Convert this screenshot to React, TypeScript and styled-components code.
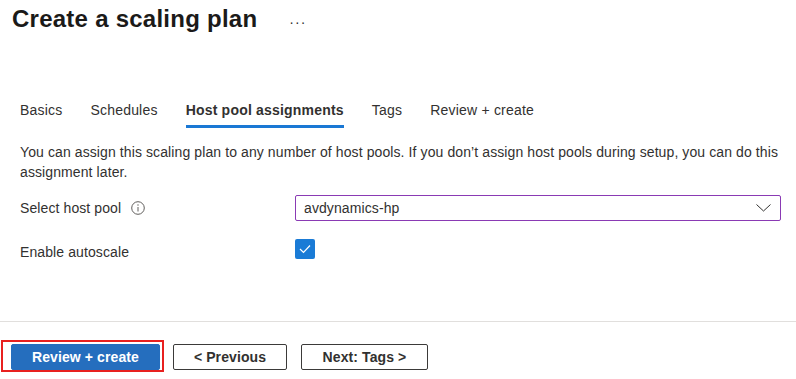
import React from "react";
import styled, { createGlobalStyle } from "styled-components";

const GlobalStyle = createGlobalStyle`
  body {
    margin: 0;
    background: #ffffff;
    font-family: "Liberation Sans", Arial, sans-serif;
    color: #323130;
    letter-spacing: 0.1px;
  }
`;

const Page = styled.div`
  width: 796px;
  height: 379px;
  display: flex;
  flex-direction: column;
  overflow: hidden;
`;

const Header = styled.div`
  display: flex;
  align-items: center;
  gap: 32px;
  padding: 3px 0 0 12px;
`;

const Title = styled.h1`
  margin: 0;
  font-size: 24px;
  line-height: 32px;
  font-weight: 700;
  letter-spacing: 0.25px;
  color: #1b1a19;
`;

const More = styled.span`
  font-size: 14px;
  letter-spacing: 1px;
  color: #323130;
  margin-top: 6px;
`;

const TabBar = styled.div`
  display: flex;
  gap: 28px;
  margin-top: 60px;
  padding-left: 20px;
`;

const Tab = styled.div<{ $active?: boolean }>`
  font-size: 14px;
  line-height: 20px;
  padding: 5px 0;
  letter-spacing: 0.2px;
  font-weight: ${(p) => (p.$active ? 700 : 400)};
  color: #323130;
  border-bottom: 3px solid ${(p) => (p.$active ? "#1a78d4" : "transparent")};
`;

const Content = styled.div`
  flex: 1;
  padding: 0 15px 0 20px;
`;

const Description = styled.p`
  margin: 14px 0 0;
  font-size: 14px;
  line-height: 20px;
`;

const Form = styled.div`
  display: grid;
  grid-template-columns: 275px 1fr;
  row-gap: 18px;
  margin-top: 13px;
`;

const Label = styled.div`
  display: flex;
  align-items: center;
  gap: 10px;
  font-size: 14px;
  line-height: 26px;
`;

const Select = styled.div`
  box-sizing: border-box;
  height: 26px;
  border: 1px solid #8a3ab4;
  border-radius: 2px;
  display: flex;
  align-items: center;
  justify-content: space-between;
  padding: 0 9px 0 8px;
  font-size: 14px;
`;

const CheckCell = styled.div`
  height: 26px;
`;

const Checkbox = styled.div`
  width: 20px;
  height: 20px;
  border-radius: 2px;
  background: #1a7bd6;
  display: flex;
  align-items: center;
  justify-content: center;
`;

const Footer = styled.div`
  height: 58px;
  box-sizing: border-box;
  border-top: 1px solid #e1dfdd;
  padding: 18px 0 0 1px;
  display: flex;
  align-items: flex-start;
`;

const Highlight = styled.div`
  border: 2px solid #e8201f;
  padding: 2px 2px 0 8px;
  margin-right: 9px;
`;

const Button = styled.button<{ $primary?: boolean; $width: number }>`
  box-sizing: border-box;
  width: ${(p) => p.$width}px;
  height: 26px;
  border-radius: 2px;
  font-family: "Liberation Sans", Arial, sans-serif;
  font-size: 14px;
  font-weight: 700;
  letter-spacing: 0.1px;
  padding: 0;
  display: block;
  cursor: pointer;
  color: ${(p) => (p.$primary ? "#ffffff" : "#323130")};
  background: ${(p) => (p.$primary ? "#256ebe" : "#ffffff")};
  border: 1px solid ${(p) => (p.$primary ? "#256ebe" : "#3b3a39")};
`;

const Buttons = styled.div`
  display: flex;
  gap: 14px;
  padding-top: 4px;
`;

const InfoIcon = () => (
  <svg width="14" height="14" viewBox="0 0 14 14">
    <circle cx="7" cy="7" r="6.3" fill="none" stroke="#605e5c" strokeWidth="1" />
    <line x1="7" y1="6" x2="7" y2="10.5" stroke="#605e5c" strokeWidth="1" />
    <circle cx="7" cy="4" r="0.7" fill="#605e5c" />
  </svg>
);

const Chevron = () => (
  <svg width="15" height="8" viewBox="0 0 15 8">
    <polyline points="0.5,0.5 7.5,7 14.5,0.5" fill="none" stroke="#323130" strokeWidth="1" />
  </svg>
);

const Check = () => (
  <svg width="12" height="10" viewBox="0 0 12 10">
    <polyline points="1,5 4.5,8.5 11,1.5" fill="none" stroke="#ffffff" strokeWidth="1.2" />
  </svg>
);

const tabs = ["Basics", "Schedules", "Host pool assignments", "Tags", "Review + create"];

export default function App() {
  return (
    <Page>
      <GlobalStyle />
      <Header>
        <Title>Create a scaling plan</Title>
        <More>···</More>
      </Header>
      <TabBar>
        {tabs.map((t) => (
          <Tab key={t} $active={t === "Host pool assignments"}>
            {t}
          </Tab>
        ))}
      </TabBar>
      <Content>
        <Description>
          You can assign this scaling plan to any number of host pools. If you don’t assign host pools during setup, you can do this assignment later.
        </Description>
        <Form>
          <Label>
            Select host pool <InfoIcon />
          </Label>
          <Select>
            avdynamics-hp
            <Chevron />
          </Select>
          <Label>Enable autoscale</Label>
          <CheckCell>
            <Checkbox>
              <Check />
            </Checkbox>
          </CheckCell>
        </Form>
      </Content>
      <Footer>
        <Highlight>
          <Button $primary $width={149}>
            Review + create
          </Button>
        </Highlight>
        <Buttons>
          <Button $width={114}>&lt; Previous</Button>
          <Button $width={127}>Next: Tags &gt;</Button>
        </Buttons>
      </Footer>
    </Page>
  );
}
